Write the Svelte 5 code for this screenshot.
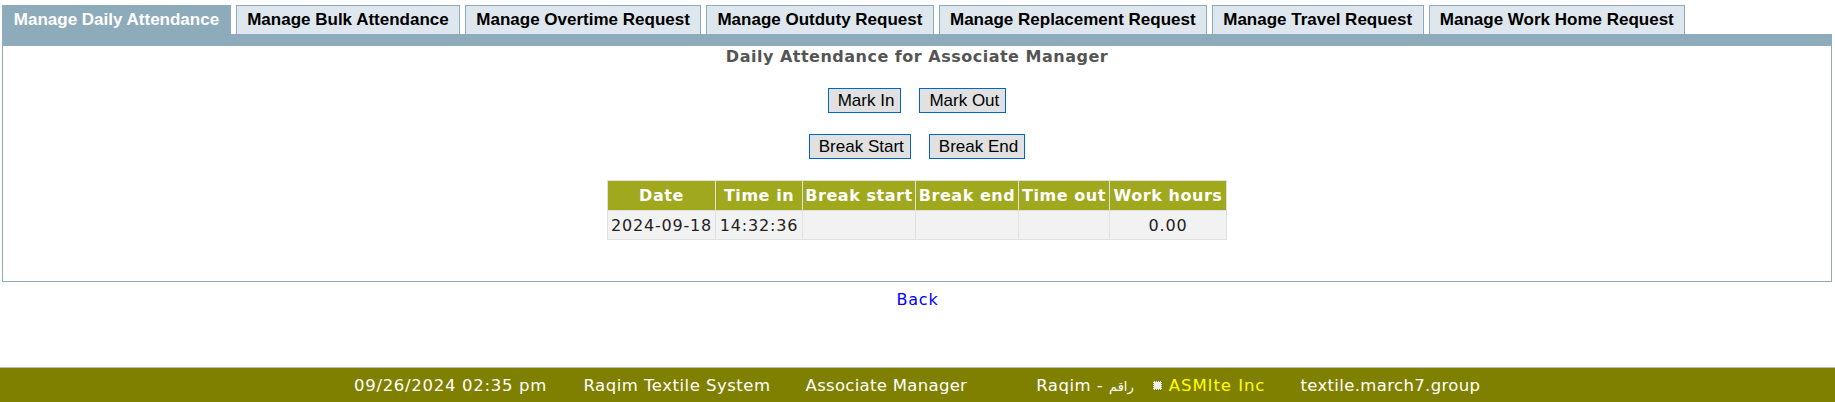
<script>
  const tabs = [
    "Manage Daily Attendance",
    "Manage Bulk Attendance",
    "Manage Overtime Request",
    "Manage Outduty Request",
    "Manage Replacement Request",
    "Manage Travel Request",
    "Manage Work Home Request"
  ];
  const heads = ["Date", "Time in", "Break start", "Break end", "Time out", "Work hours"];
  const row = ["2024-09-18", "14:32:36", "", "", "", "0.00"];
</script>

<div class="page">
  <ul class="tabs">
    {#each tabs as tab, i}
      <li class:active={i === 0}>{tab}</li>
    {/each}
  </ul>

  <div class="panel">
    <h3>Daily Attendance for Associate Manager</h3>

    <div class="btns first">
      <button>Mark In</button>
      <button>Mark Out</button>
    </div>
    <div class="btns second">
      <button>Break Start</button>
      <button>Break End</button>
    </div>

    <table>
      <thead>
        <tr>
          {#each heads as h}
            <th>{h}</th>
          {/each}
        </tr>
      </thead>
      <tbody>
        <tr>
          {#each row as v}
            <td>{v}</td>
          {/each}
        </tr>
      </tbody>
    </table>
  </div>

  <div class="back"><a href="#back">Back</a></div>

  <footer>
    <span class="date">09/26/2024 02:35 pm</span>
    <span class="sys">Raqim Textile System</span>
    <span class="role">Associate Manager</span>
    <span class="brand">Raqim - <span class="ar">راقم</span></span>
    <span class="bullet"></span>
    <span class="inc">ASMIte Inc</span>
    <span class="host">textile.march7.group</span>
  </footer>
</div>

<style>
  :global(body) {
    margin: 0;
    background: #fff;
  }

  .page {
    height: 402px;
    display: flex;
    flex-direction: column;
    font-family: "DejaVu Sans", Verdana, sans-serif;
    overflow: hidden;
  }

  .tabs {
    list-style: none;
    margin: 0;
    padding: 5px 0 0 2px;
    display: flex;
    gap: 5px;
    height: 29px;
  }

  .tabs li {
    box-sizing: border-box;
    height: 29px;
    padding: 4px 10.3px 0;
    background: #dfe7ee;
    border: 1px solid #8eabbb;
    border-bottom: none;
    font: bold 17px/20px "Liberation Sans", Arial, sans-serif;
    color: #000;
    white-space: nowrap;
  }

  .tabs li.active {
    background: #8eabbb;
    color: #fff;
    padding: 4px 10.8px 0;
  }

  .panel {
    box-sizing: border-box;
    margin: 0 3px 0 2px;
    height: 248px;
    border: 1px solid #8eabbb;
    border-top: 12px solid #8eabbb;
    display: flex;
    flex-direction: column;
    align-items: center;
  }

  h3 {
    margin: 2px 0 0;
    font-size: 16px;
    line-height: 18px;
    letter-spacing: 0.5px;
    font-weight: bold;
    color: #555;
  }

  .btns {
    display: flex;
    justify-content: center;
    gap: 18px;
  }

  .first {
    margin-top: 22px;
  }

  .second {
    margin-top: 21px;
  }

  button {
    box-sizing: border-box;
    height: 25px;
    padding: 0 6px 0 9px;
    background: #e1e1e1;
    border: 1px solid #0066cc;
    border-radius: 0;
    font: 17px "Liberation Sans", Arial, sans-serif;
    color: #000;
  }

  table {
    margin-top: 21px;
    border-collapse: collapse;
    table-layout: fixed;
    width: 619px;
  }

  th {
    box-sizing: border-box;
    background: #a0a81e;
    color: #fff;
    height: 30px;
    padding: 0;
    border: 1px solid #e0e0e0;
    font-size: 16px;
    letter-spacing: 0.55px;
    white-space: nowrap;
  }

  th:nth-child(1) { width: 108px; }
  th:nth-child(2) { width: 87px; }
  th:nth-child(3) { width: 113px; }
  th:nth-child(4) { width: 103px; }
  th:nth-child(5) { width: 91px; }
  th:nth-child(6) { width: 117px; }

  td {
    box-sizing: border-box;
    background: #f2f2f2;
    color: #222;
    height: 29px;
    padding: 0;
    border: 1px solid #e0e0e0;
    font-size: 16px;
    text-align: center;
    letter-spacing: 0.8px;
    white-space: nowrap;
  }

  .back {
    margin-top: 8px;
    text-align: center;
    font-size: 16px;
    letter-spacing: 0.8px;
    line-height: 20px;
  }

  .back a {
    color: #0000ff;
    text-decoration: none;
  }

  footer {
    margin-top: auto;
    height: 35px;
    box-sizing: border-box;
    border-top: 1px solid #bbb;
    background: #808000;
    color: #fff;
    font-size: 16.5px;
    letter-spacing: 0.5px;
    display: flex;
    align-items: center;
    padding-left: 354px;
    white-space: nowrap;
  }

  .date { letter-spacing: 0.7px; }
  .sys { margin-left: 36.5px; }
  .role { margin-left: 35px; letter-spacing: 0.3px; }
  .brand { margin-left: 69px; }
  .ar { font-size: 13px; }

  .bullet {
    box-sizing: border-box;
    width: 9px;
    height: 9px;
    margin-left: 19px;
    background: #eee;
    border: 1px dotted #808000;
  }

  .inc {
    margin-left: 7px;
    color: #ffff00;
    letter-spacing: 0.95px;
  }

  .host { margin-left: 35px; letter-spacing: 0.35px; }
</style>
